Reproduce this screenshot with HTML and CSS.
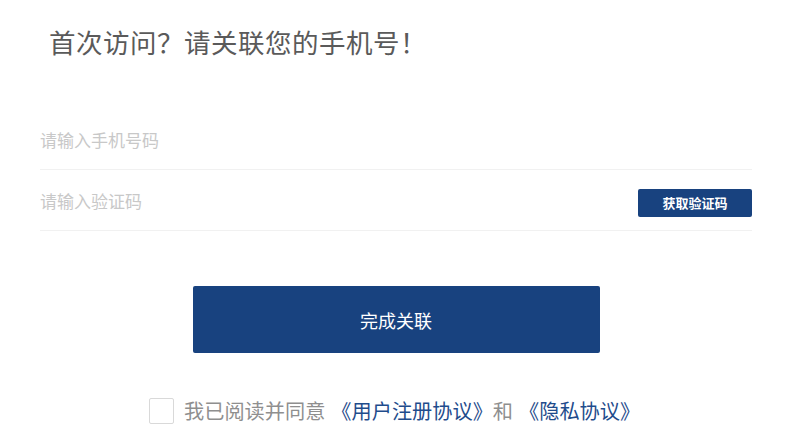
FILE: index.html
```html
<!DOCTYPE html>
<html lang="zh-CN">
<head>
<meta charset="utf-8">
<link rel="stylesheet" href="styles.css">
</head>
<body>
<div class="page">
  <h1 class="title">首次访问？请关联您的手机号！</h1>
  <div class="form">
    <div class="row">
      <input class="field" type="text" placeholder="请输入手机号码">
    </div>
    <div class="row">
      <input class="field" type="text" placeholder="请输入验证码">
      <button class="code-btn" type="button">获取验证码</button>
    </div>
  </div>
  <div class="submit-wrap">
    <button class="submit" type="button">完成关联</button>
  </div>
  <div class="agree">
    <span class="check"></span>
    <span class="agree-text">我已阅读并同意<a class="link">《用户注册协议》</a>和<a class="link">《隐私协议》</a></span>
  </div>
</div>
</body>
</html>
```
FILE: styles.css
```css
* { box-sizing: border-box; }
html, body {
  margin: 0;
  padding: 0;
  background: #ffffff;
}
body {
  font-family: "Noto Sans CJK SC", "Noto Sans", sans-serif;
}
.page {
  width: 712px;
  margin-left: 40px;
  padding-top: 24px;
}
.title {
  margin: 0 0 0 9px;
  font-size: 26.5px;
  line-height: 36px;
  font-weight: 400;
  color: #5a5a5a;
  letter-spacing: 0.5px;
}
.form {
  margin-top: 49px;
}
.row {
  display: flex;
  align-items: center;
  height: 61px;
  border-bottom: 1px solid #f1f1f1;
}
.field {
  flex: 1;
  border: none;
  outline: none;
  padding: 0;
  margin: 0;
  font-family: inherit;
  font-size: 17px;
  color: #333;
  background: transparent;
  height: 30px;
}
.field::placeholder { color: #c8c8c8; }
.code-btn {
  width: 114px;
  height: 28px;
  margin-top: 5px;
  border: none;
  border-radius: 2px;
  background: #18427f;
  color: #ffffff;
  font-family: inherit;
  font-size: 13px;
  font-weight: 700;
  padding: 0;
}
.submit-wrap {
  display: flex;
  justify-content: center;
  margin-top: 55px;
}
.submit {
  width: 407px;
  height: 67px;
  border: none;
  border-radius: 2px;
  background: #18427f;
  color: #ffffff;
  font-family: inherit;
  font-size: 18px;
  padding: 0;
}
.agree {
  display: flex;
  align-items: center;
  margin-top: 44px;
  padding-left: 109px;
  gap: 10px;
}
.check {
  width: 25px;
  height: 26px;
  border: 1px solid #d9d9d9;
  border-radius: 2px;
  flex: none;
}
.agree-text {
  font-size: 20.2px;
  line-height: 28px;
  color: #8f8f8f;
}
.link {
  color: #1f4c8c;
  margin-left: 6px;
}
```
